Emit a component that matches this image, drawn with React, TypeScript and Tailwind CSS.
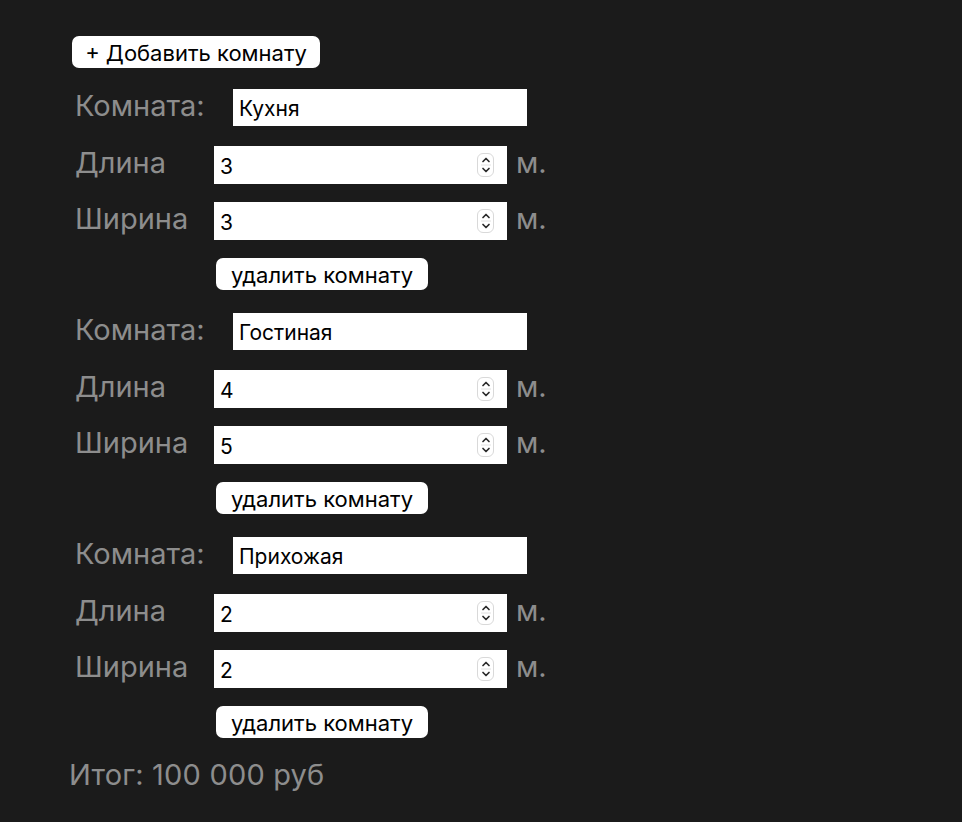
import React from "react";

const rooms = [
  { name: "Кухня", l: "3", w: "3" },
  { name: "Гостиная", l: "4", w: "5" },
  { name: "Прихожая", l: "2", w: "2" },
];

function Spinner() {
  return (
    <div className="absolute right-[13px] top-[7px] w-[17px] h-[24px] rounded-[6px] border border-[#d9d9d9] bg-white flex items-center justify-center">
      <svg width="10" height="22" viewBox="0 0 10 22">
        <path d="M2 7.5 L5 4.5 L8 7.5" fill="none" stroke="#2a2a2a" strokeWidth="1.7" strokeLinecap="round" strokeLinejoin="round" />
        <line x1="-2" y1="11" x2="12" y2="11" stroke="#e0e0e0" strokeWidth="1" />
        <path d="M2 14.5 L5 17.5 L8 14.5" fill="none" stroke="#2a2a2a" strokeWidth="1.7" strokeLinecap="round" strokeLinejoin="round" />
      </svg>
    </div>
  );
}

function NumRow({ label, value }: { label: string; value: string }) {
  return (
    <div className="flex items-center h-[38px]">
      <div className="w-[214px] shrink-0 pl-[75px] text-[29px] text-[#8d8d8d] leading-none -mt-[6px] whitespace-nowrap">{label}</div>
      <div className="relative w-[293px] h-[38px] bg-white shrink-0">
        <input
          readOnly
          value={value}
          className="w-full h-full pl-[6px] text-[21px] text-black bg-white outline-none pt-[2px]"
        />
        <Spinner />
      </div>
      <div className="ml-[9px] text-[29px] text-[#8d8d8d] leading-none -mt-[6px]">м.</div>
    </div>
  );
}

export default function App() {
  return (
    <div
      className="min-h-[822px] w-[962px] bg-[#1b1b1b] pt-[36px]"
      style={{ fontFamily: "Inter, 'Noto Sans', sans-serif" }}
    >
      <div className="pl-[72px]">
        <button className="h-[32px] w-[248px] bg-white rounded-[7px] text-[22px] text-black leading-none pt-[2px]">
          + Добавить комнату
        </button>
      </div>
      <div className="mt-[21px] flex flex-col gap-[23px]">
        {rooms.map((r) => (
          <div key={r.name} className="flex flex-col">
            <div className="flex items-center h-[37px]">
              <div className="w-[233px] shrink-0 pl-[75px] text-[29px] text-[#8d8d8d] leading-none -mt-[5px]">Комната:</div>
              <input
                readOnly
                value={r.name}
                className="w-[294px] h-[37px] bg-white pl-[6px] text-[21px] text-black outline-none pt-[2px] shrink-0"
              />
            </div>
            <div className="mt-[20px]">
              <NumRow label="Длина" value={r.l} />
            </div>
            <div className="mt-[18px]">
              <NumRow label="Ширина" value={r.w} />
            </div>
            <div className="mt-[18px] pl-[216px]">
              <button className="h-[32px] w-[212px] bg-white rounded-[7px] text-[22px] text-black leading-none pt-[2px]">
                удалить комнату
              </button>
            </div>
          </div>
        ))}
      </div>
      <div className="pl-[69px] mt-[22px] text-[29px] text-[#8d8d8d] leading-[30px] tracking-[0.2px]">Итог: 100 000 руб</div>
    </div>
  );
}
